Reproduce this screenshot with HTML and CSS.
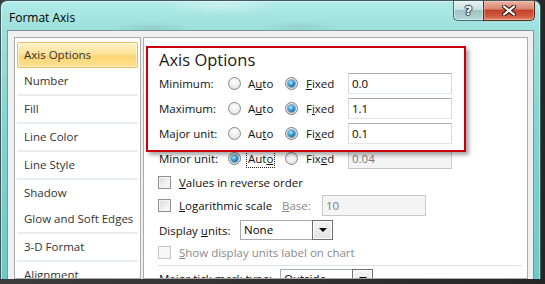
FILE: index.html
```html
<!DOCTYPE html>
<html>
<head>
<meta charset="utf-8">
<title>Format Axis</title>
<link rel="stylesheet" href="styles.css">
</head>
<body>
<div class="window">
  <div class="titlebar">
    <span class="title">Format Axis</span>
    <div class="caption">
      <div class="cbtn help"><span class="q">?</span></div>
      <div class="cbtn close">
        <svg width="16" height="11" viewBox="0 0 16 11">
          <path d="M3 1.5 L13 9.5 M13 1.5 L3 9.5" stroke="#3b1a14" stroke-width="4.2" stroke-linecap="round"/>
          <path d="M3 1.5 L13 9.5 M13 1.5 L3 9.5" stroke="#ffffff" stroke-width="2.2" stroke-linecap="round"/>
        </svg>
      </div>
    </div>
  </div>
  <div class="client">
    <div class="nav">
      <div class="item sel">Axis Options</div>
      <div class="item">Number</div>
      <div class="sep"></div>
      <div class="item">Fill</div>
      <div class="sep"></div>
      <div class="item">Line Color</div>
      <div class="sep"></div>
      <div class="item">Line Style</div>
      <div class="sep"></div>
      <div class="item">Shadow</div>
      <div class="item">Glow and Soft Edges</div>
      <div class="sep"></div>
      <div class="item">3-D Format</div>
      <div class="sep"></div>
      <div class="item">Alignment</div>
    </div>
    <div class="panel">
      <div class="callout">
        <h2 class="heading">Axis Options</h2>
        <div class="row">
          <span class="lbl">Minimum:</span>
          <span class="opt"><span class="radio"></span><span>A<u>u</u>to</span></span>
          <span class="opt fixed"><span class="radio on"><i class="dot"></i></span><span><u>F</u>ixed</span></span>
          <span class="field">0.0</span>
        </div>
        <div class="row">
          <span class="lbl">Maximum:</span>
          <span class="opt"><span class="radio"></span><span>A<u>u</u>to</span></span>
          <span class="opt fixed"><span class="radio on"><i class="dot"></i></span><span>F<u>i</u>xed</span></span>
          <span class="field">1.1</span>
        </div>
        <div class="row">
          <span class="lbl">Major unit:</span>
          <span class="opt"><span class="radio"></span><span>Au<u>t</u>o</span></span>
          <span class="opt fixed"><span class="radio on"><i class="dot"></i></span><span>Fi<u>x</u>ed</span></span>
          <span class="field">0.1</span>
        </div>
      </div>
      <div class="row minor">
        <span class="lbl">Minor unit:</span>
        <span class="opt"><span class="radio on"><i class="dot"></i></span><span class="focus">Aut<u>o</u></span></span>
        <span class="opt fixed"><span class="radio"></span><span>Fix<u>e</u>d</span></span>
        <span class="field dis">0.04</span>
      </div>
      <div class="check-row values">
        <span class="check"></span><span><u>V</u>alues in reverse order</span>
      </div>
      <div class="check-row log">
        <span class="check"></span><span class="log-txt"><u>L</u>ogarithmic scale</span>
        <span class="base-lbl"><u>B</u>ase:</span>
        <span class="field dis">10</span>
      </div>
      <div class="sel-row units">
        <span class="sel-lbl">Display <u>u</u>nits:</span>
        <div class="select"><span class="sel-val">None</span><span class="dd"><i class="tri"></i></span></div>
      </div>
      <div class="check-row show">
        <span class="check off"></span><span class="muted"><u>S</u>how display units label on chart</span>
      </div>
      <div class="hr"></div>
      <div class="sel-row tick">
        <span class="sel-lbl">Major tick mark type:</span>
        <div class="select"><span class="sel-val">Outside</span><span class="dd"><i class="tri"></i></span></div>
      </div>
    </div>
  </div>
</div>
</body>
</html>
```

FILE: styles.css
```css
* { box-sizing: border-box; }
html, body { margin: 0; padding: 0; }
body {
  width: 545px;
  height: 284px;
  overflow: hidden;
  background: linear-gradient(90deg, #3c3c3c, #262626);
  font-family: "Open Sans", "Noto Sans", sans-serif;
  font-size: 11.5px;
  color: #111;
}
u { text-decoration: underline; text-underline-offset: 1px; }

.window {
  width: 541px;
  height: 279px;
  border: 1px solid #40595d;
  border-bottom: none;
  border-radius: 7px 7px 0 0;
  background:
    radial-gradient(ellipse 60px 10px at 220px 4px, rgba(255,255,255,.35), transparent),
    radial-gradient(ellipse 40px 6px at 150px 27px, rgba(90,120,120,.18), transparent),
    radial-gradient(ellipse 40px 6px at 300px 26px, rgba(90,120,120,.15), transparent),
    linear-gradient(180deg, #b0ebe8 0, #9de0dc 28px, #84d4cf 120px, #6ccac5 100%);
  box-shadow: inset 1px 1px 0 rgba(255,255,255,.5), inset -1px 0 0 rgba(255,255,255,.4);
  overflow: hidden;
  display: flex;
  flex-direction: column;
}

.titlebar {
  height: 29px;
  flex: none;
  display: flex;
  justify-content: space-between;
  align-items: flex-start;
}
.title {
  font-size: 12px;
  line-height: 29px;
  padding: 2px 0 0 8px;
  color: #000;
}
.caption {
  display: flex;
  margin-right: 5px;
}
.cbtn {
  height: 20px;
  display: flex;
  align-items: center;
  justify-content: center;
  border: 1px solid #4b6a70;
  border-top: none;
}
.help {
  width: 30px;
  border-right: none;
  border-radius: 0 0 0 5px;
  background: linear-gradient(180deg, #e3f1f1 0, #c9e1e1 45%, #9fc3c4 50%, #b7d8d8 100%);
  box-shadow: inset 0 0 0 1px rgba(255,255,255,.45);
}
.q {
  font-family: "DejaVu Sans", sans-serif;
  font-weight: bold;
  font-size: 13px;
  color: #fff;
  text-shadow: 0 0 1px #2e4447, 1px 0 1px #2e4447, -1px 0 1px #2e4447, 0 1px 1px #2e4447, 0 -1px 1px #2e4447;
  line-height: 1;
}
.close {
  width: 52px;
  border-color: #5b2218;
  border-radius: 0 0 5px 0;
  background: linear-gradient(180deg, #eab3a4 0, #da8a74 40%, #c3432a 50%, #cf5a3e 80%, #e0876a 100%);
  box-shadow: inset 0 0 0 1px rgba(255,220,210,.4);
}
.close svg { display: block; }

.client {
  flex: 1;
  margin: 0 6px;
  border: 1px solid #7b979c;
  border-bottom: none;
  background: #f0f0f0;
  display: flex;
  gap: 2px;
  padding: 6px 5px 0 6px;
  min-height: 0;
}

.nav {
  width: 127px;
  flex: none;
  border: 1px solid #ababab;
  background: #fff;
  padding: 4px 2px;
  overflow: hidden;
}
.item {
  height: 26px;
  line-height: 26px;
  padding-left: 7px;
  color: #333;
  white-space: nowrap;
}
.item.sel {
  border: 1px solid #e3bd5c;
  border-radius: 2px;
  background: linear-gradient(180deg, #fff2c4 0, #fee39a 45%, #fdd675 55%, #fde08f 100%);
  box-shadow: inset 0 0 0 1px rgba(255,255,255,.55);
  padding-left: 6px;
  line-height: 24px;
}
.sep {
  height: 2px;
  background: #e8ecef;
}

.panel {
  flex: 1;
  border: 1px solid #ababab;
  background: #fff;
  padding: 8px 5px 0 15px;
  overflow: hidden;
}

.callout {
  position: relative;
  z-index: 1;
  width: 320px;
  margin-left: -13px;
  border: 2px solid #c8000c;
  padding: 0 0 4px 11px;
  background: #fff;
  box-shadow: 3px 3px 4px rgba(0,0,0,.35);
}
.heading {
  margin: 0;
  font-size: 16.5px;
  font-weight: normal;
  line-height: 23px;
  color: #1a1a1a;
}

.row {
  display: grid;
  grid-template-columns: 69px 57px 63px 104px;
  align-items: center;
  height: 25px;
}
.row.minor { margin-top: -6px; }
.lbl { white-space: nowrap; }
.opt {
  display: flex;
  align-items: center;
  gap: 7px;
}
.opt.fixed { gap: 8px; }

.radio {
  width: 13px;
  height: 13px;
  flex: none;
  border-radius: 50%;
  border: 1px solid #8a8a8a;
  background: radial-gradient(circle at 50% 35%, #ffffff 0, #ececec 55%, #d4d4d4 100%);
  display: flex;
  align-items: center;
  justify-content: center;
}
.radio.on { border-color: #6f7f8a; }
.dot {
  width: 7px;
  height: 7px;
  border-radius: 50%;
  background: radial-gradient(circle at 40% 35%, #b9ecff 0, #39a6e0 40%, #0d5e95 80%, #0a3f66 100%);
  box-shadow: 0 0 0 1px rgba(20,60,90,.45);
}
.focus {
  outline: 1px dotted #222;
  outline-offset: 1px;
  line-height: 15px;
}

.field {
  display: block;
  width: 104px;
  height: 21px;
  border: 1px solid;
  border-color: #abadb3 #d5d9e0 #dfe3ea #d5d9e0;
  background: #fff;
  padding-left: 3px;
  line-height: 19px;
  color: #000;
}
.field.dis {
  background: #f4f4f4;
  border-color: #c9c9c9;
  color: #7a7a7a;
}

.check-row {
  display: flex;
  align-items: center;
  gap: 8px;
  margin-left: -1px;
}
.values { height: 22px; }
.log { height: 25px; }
.show { height: 20px; }
.check {
  width: 13px;
  height: 13px;
  flex: none;
  border: 1px solid #8e8f8f;
  background: linear-gradient(135deg, #d9d9d9 0, #f1f1f1 60%, #ffffff 100%);
  box-shadow: inset 0 0 0 1px #f4f4f4;
}
.check.off {
  border-color: #c8c8c8;
  background: #f6f6f6;
  box-shadow: none;
}
.log-txt { width: 95px; white-space: nowrap; }
.base-lbl { width: 32px; color: #888; }
.muted { color: #8a8a8a; white-space: nowrap; }

.sel-row {
  display: flex;
  align-items: center;
}
.units { height: 24px; }
.units .sel-lbl { width: 81px; }
.tick { align-items: flex-start; margin-top: 3px; }
.tick .sel-lbl { width: 121px; line-height: 19px; padding-top: 0; white-space: nowrap; }
.select {
  width: 93px;
  height: 20px;
  border: 1px solid #a6abb3;
  background: #fff;
  display: flex;
  align-items: stretch;
}
.sel-val {
  flex: 1;
  padding-left: 3px;
  line-height: 18px;
  color: #000;
}
.dd {
  width: 21px;
  border: 1px solid #6f6f6f;
  margin: -1px -1px -1px 0;
  background: linear-gradient(180deg, #f4f4f4, #e2e2e2);
  box-shadow: inset 0 0 0 1px #fff;
  display: flex;
  align-items: center;
  justify-content: center;
}
.tri {
  width: 0;
  height: 0;
  border-left: 4px solid transparent;
  border-right: 4px solid transparent;
  border-top: 4px solid #000;
}
.hr {
  height: 1px;
  background: #dde2e6;
  margin: 3px 0 0 -1px;
}
```
